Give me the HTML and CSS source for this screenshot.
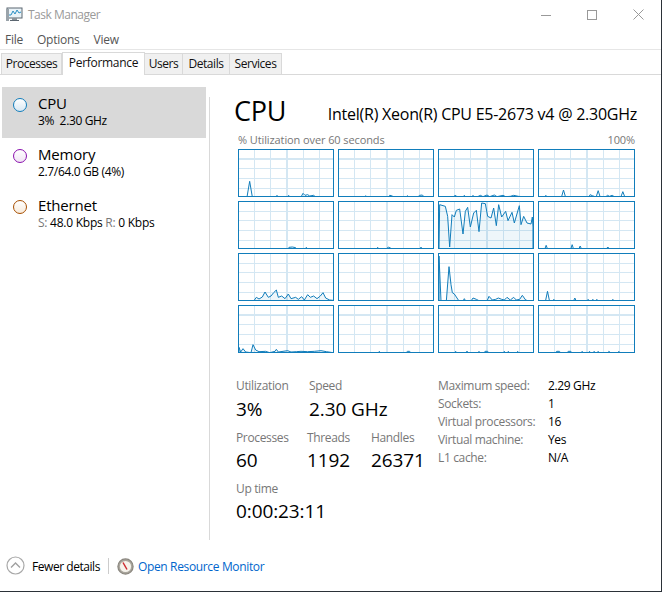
FILE: index.html
```html
<!DOCTYPE html>
<html lang="en">
<head>
<meta charset="utf-8">
<title>Task Manager</title>
<link rel="stylesheet" href="styles.css">
</head>
<body>
<div class="window">
  <header class="titlebar">
    <svg class="appicon" viewBox="0 0 18 16" width="18" height="16">
      <rect x="1" y="1" width="15" height="10" fill="#eaf3f8" stroke="#5b6670"/>
      <polyline points="2,8 5,8 7,4 9,7 11,3 13,6 15,5" fill="none" stroke="#2a8fc4"/>
      <rect x="0" y="2" width="3" height="12" fill="#9aa3aa"/>
      <rect x="6" y="11" width="5" height="2" fill="#8b949b"/>
      <rect x="4" y="13" width="9" height="1" fill="#5b6670"/>
    </svg>
    <span class="apptitle">Task Manager</span>
    <div class="controls">
      <svg width="10" height="10" viewBox="0 0 10 10"><path d="M0 5.5H10" stroke="#999" fill="none"/></svg>
      <svg width="10" height="10" viewBox="0 0 10 10"><rect x=".5" y=".5" width="9" height="9" stroke="#999" fill="none"/></svg>
      <svg width="11" height="11" viewBox="0 0 11 11"><path d="M.5 .5L10.5 10.5M10.5 .5L.5 10.5" stroke="#999" fill="none"/></svg>
    </div>
  </header>
  <nav class="menu"><span>File</span><span>Options</span><span>View</span></nav>
  <div class="tabs">
    <span class="tab t1">Processes</span>
    <span class="tab active t2">Performance</span>
    <span class="tab t3">Users</span>
    <span class="tab t4">Details</span>
    <span class="tab t5">Services</span>
  </div>
  <main class="content">
    <aside class="sidebar">
      <div class="item selected">
        <span class="dot cpu"></span>
        <div><div class="name">CPU</div><div class="sub">3%&nbsp; 2.30 GHz</div></div>
      </div>
      <div class="item">
        <span class="dot mem"></span>
        <div><div class="name">Memory</div><div class="sub">2.7/64.0 GB (4%)</div></div>
      </div>
      <div class="item">
        <span class="dot eth"></span>
        <div><div class="name">Ethernet</div><div class="sub net"><span class="dim">S:</span> 48.0 Kbps <span class="dim">R:</span> 0 Kbps</div></div>
      </div>
    </aside>
    <section class="panel">
      <div class="head"><h1>CPU</h1><div class="model">Intel(R) Xeon(R) CPU E5-2673 v4 @ 2.30GHz</div></div>
      <div class="axis"><span>% Utilization over 60 seconds</span><span>100%</span></div>
      <div class="graphs">
        <div class="graph"><svg viewBox="0 0 282 138"><polyline points="0,141 24,141 32,94 40,141 110,141 114,136 118,141 146,141 149,136 152,141 186,141 192,130 198,136 206,134 212,138 224,136 230,141 282,141"/></svg></div>
        <div class="graph"><svg viewBox="0 0 282 138"><polyline points="0,141 78,141 80,137 82,141 148,141 152,136 158,137 164,141 202,141 205,137 210,141 236,141 242,136 250,135 256,141 282,141"/></svg></div>
        <div class="graph"><svg viewBox="0 0 282 138"><polyline points="0,141 44,141 49,135 54,141 72,141 76,136 80,141 98,141 102,136 106,141 116,140 124,136 132,140 144,135 152,140 166,135 174,140 192,136 200,140 214,139 224,136 238,139 252,140 262,141 282,141"/></svg></div>
        <div class="graph"><svg viewBox="0 0 282 138"><polyline points="0,141 16,141 19,136 22,141 66,141 72,120 78,141 148,141 152,134 158,137 170,141 176,122 182,141 198,141 204,136 210,139 218,136 226,141 244,141 250,125 256,141 282,141"/></svg></div>
        <div class="graph"><svg viewBox="0 0 282 138"><polyline points="0,141 146,141 150,136 160,135 170,137 174,141 198,141 202,136 206,141 282,141"/></svg></div>
        <div class="graph"><svg viewBox="0 0 282 138"><polyline points="0,141 112,141 116,136 120,141 142,141 148,135 154,138 160,141 240,141 246,136 252,141 282,141"/></svg></div>
        <div class="graph"><svg viewBox="0 0 282 138"><polyline class="area" points="0,141 2,8 19,13 26,43 32,135 39,38 46,45 52,25 62,21 72,96 79,28 86,16 94,75 104,33 112,25 120,89 128,3 139,5 146,43 156,48 164,18 172,71 179,8 188,45 200,28 207,56 219,31 226,63 241,11 246,68 254,43 264,63 276,66 280,45 282,75 282,141"/></svg></div>
        <div class="graph"><svg viewBox="0 0 282 138"><polyline points="0,141 16,141 20,130 24,141 94,141 98,128 102,141 118,141 122,132 126,141 200,141 205,135 210,141 282,141"/></svg></div>
        <div class="graph"><svg viewBox="0 0 282 138"><polyline class="area" points="0,141 44,141 52,130 60,135 70,129 78,114 88,130 96,126 104,116 112,108 118,130 128,126 138,134 148,120 156,134 170,130 178,136 188,128 196,138 206,122 214,130 224,126 234,134 244,126 252,116 260,132 272,138 282,139 282,141"/></svg></div>
        <div class="graph"><svg viewBox="0 0 282 138"><polyline points="0,141 282,141"/></svg></div>
        <div class="graph"><svg viewBox="0 0 282 138"><polyline class="area" points="0,141 0,6 6,141 22,141 30,38 36,92 40,116 46,120 60,141 72,141 76,134 80,141 96,141 102,132 112,136 122,141 144,141 150,127 160,138 170,136 178,132 188,136 196,138 204,130 214,138 224,130 232,138 242,136 250,124 260,138 270,141 282,141"/></svg></div>
        <div class="graph"><svg viewBox="0 0 282 138"><polyline points="0,141 18,141 24,112 30,141 40,141 43,136 46,141 102,141 106,132 110,141 142,141 146,136 150,141 156,141 160,136 164,141 168,141 172,136 176,141 216,141 220,136 224,141 282,141"/></svg></div>
        <div class="graph"><svg viewBox="0 0 282 138"><polyline class="area" points="0,141 0,124 5,138 12,128 20,138 36,140 42,116 50,132 60,137 80,136 92,140 108,136 112,130 118,138 146,134 156,138 172,137 186,136 206,137 226,136 246,134 262,137 282,140 282,141"/></svg></div>
        <div class="graph"><svg viewBox="0 0 282 138"><polyline points="0,141 118,141 121,136 124,141 200,141 205,136 212,136 216,141 282,141"/></svg></div>
        <div class="graph"><svg viewBox="0 0 282 138"><polyline points="0,141 46,141 50,136 54,141 78,141 84,136 90,141 116,141 120,136 124,141 134,141 138,136 146,136 150,141 192,141 196,136 200,141 204,141 208,136 212,141 232,141 236,136 240,141 282,141"/></svg></div>
        <div class="graph"><svg viewBox="0 0 282 138"><polyline points="0,141 46,141 52,136 60,136 64,141 82,141 86,136 94,136 98,141 124,141 128,136 132,141 146,141 150,136 154,141 160,141 164,136 168,141 172,141 176,136 180,141 204,141 208,136 214,141 234,141 238,136 242,141 282,141"/></svg></div>
      </div>
      <div class="stats">
        <div class="live">
          <div class="row first">
            <div class="stat w73"><div class="label">Utilization</div><div class="value big">3%</div></div>
            <div class="stat"><div class="label">Speed</div><div class="value big">2.30 GHz</div></div>
          </div>
          <div class="row">
            <div class="stat w71"><div class="label">Processes</div><div class="value">60</div></div>
            <div class="stat w64"><div class="label">Threads</div><div class="value">1192</div></div>
            <div class="stat"><div class="label">Handles</div><div class="value">26371</div></div>
          </div>
          <div class="row">
            <div class="stat"><div class="label">Up time</div><div class="value">0:00:23:11</div></div>
          </div>
        </div>
        <dl class="specs">
          <dt>Maximum speed:</dt><dd>2.29 GHz</dd>
          <dt>Sockets:</dt><dd>1</dd>
          <dt>Virtual processors:</dt><dd>16</dd>
          <dt>Virtual machine:</dt><dd>Yes</dd>
          <dt>L1 cache:</dt><dd>N/A</dd>
        </dl>
      </div>
    </section>
  </main>
  <footer class="footer">
    <svg width="20" height="20" viewBox="0 0 20 20"><circle cx="9.5" cy="9.5" r="8.5" fill="#fff" stroke="#a8a8a8" stroke-width="1.2"/><polyline points="5,11.5 9.5,7 14,11.5" fill="none" stroke="#a0a0a0" stroke-width="1.4"/></svg>
    <span class="fewer">Fewer details</span>
    <span class="sep"></span>
    <svg width="17" height="17" viewBox="0 0 17 17"><circle cx="8.5" cy="8.5" r="7.6" fill="#a9a59c" stroke="#8a867e" stroke-width="1.2"/><circle cx="8.5" cy="8.5" r="5.6" fill="#f6f3ec"/><path d="M6 4.5L10 11.5" stroke="#cc2a2f" stroke-width="1.5"/></svg>
    <a class="link">Open Resource Monitor</a>
  </footer>
</div>
</body>
</html>
```
FILE: styles.css
```css
* { box-sizing: border-box; }
html, body { margin: 0; padding: 0; background: #fff; }
body { font-family: "Open Sans", "Noto Sans", "Liberation Sans", sans-serif; font-size: 12px; color: #000; }
.window { width: 662px; height: 592px; display: flex; flex-direction: column; border-right: 1px solid #2b3138; border-bottom: 1px solid #2b3138; overflow: hidden; }

.titlebar { height: 29px; display: flex; align-items: center; padding-left: 6px; flex: none; }
.appicon { flex: none; }
.apptitle { margin-left: 4px; color: #9a9a9a; font-size: 12px; letter-spacing: -.5px; }
.controls { margin-left: auto; display: flex; align-items: center; gap: 36px; padding-right: 17px; }

.menu { height: 21px; display: flex; gap: 14px; padding-left: 5px; align-items: center; color: #555; font-size: 12px; letter-spacing: -.25px; border-bottom: 1px solid #e6e6e6; flex: none; }

.tabs { height: 25px; display: flex; align-items: flex-end; border-bottom: 1px solid #d9d9d9; flex: none; padding-left: 1px; }
.tab { height: 21px; line-height: 20px; background: #f0f0f0; border: 1px solid #d9d9d9; border-bottom: 0; border-left: 0; text-align: center; font-size: 12px; letter-spacing: -.45px; color: #111; }
.tab.active { height: 23px; margin-bottom: -1px; line-height: 20px; background: #fff; border-left: 1px solid #d9d9d9; position: relative; }
.t1 { width: 61px; border-left: 1px solid #d9d9d9; }
.t2 { width: 83px; letter-spacing: -.3px; }
.t3 { width: 38px; }
.t4 { width: 47px; }
.t5 { width: 52px; }

.content { flex: 1; display: flex; min-height: 0; padding-top: 12px; }
.sidebar { width: 209px; flex: none; padding-left: 2px; padding-right: 3px; }
.item { height: 51px; display: flex; align-items: flex-start; gap: 11px; padding: 8px 0 0 11px; }
.item.selected { background: #d9d9d9; }
.dot { width: 14px; height: 14px; border-radius: 50%; margin-top: 3px; flex: none; border: 1.5px solid; }
.cpu { border-color: #117dbb; background: linear-gradient(#fff, #d9e8f3); }
.mem { border-color: #8b12ae; background: linear-gradient(#fff, #f0e4f4); }
.eth { border-color: #a74f01; background: linear-gradient(#fff, #f8ebdc); }
.name { font-size: 15px; line-height: 17px; letter-spacing: -.2px; }
.sub { font-size: 12px; line-height: 16px; letter-spacing: -.35px; margin-top: 1px; }
.sub.net { letter-spacing: -.25px; }
.dim { color: #777; }

.panel { flex: 1; margin-top: 10px; border-left: 1px solid #d9d9d9; padding: 0 24px 0 26px; height: 443px; min-width: 0; }
.head { display: flex; align-items: flex-end; justify-content: space-between; height: 30px; }
h1 { margin: 0 0 0 -2px; font-size: 27px; font-weight: 400; line-height: 32px; letter-spacing: -.3px; }
.model { font-size: 16px; line-height: 20px; letter-spacing: -.25px; white-space: nowrap; margin-bottom: 3px; margin-left: -9px; }
.axis { display: flex; justify-content: space-between; margin: 6px 2px 0 2px; height: 14px; line-height: 14px; color: #777; font-size: 11px; letter-spacing: -.1px; }
.graphs { display: grid; grid-template-columns: repeat(3, 96px) 97px; grid-template-rows: repeat(4, 48px); gap: 4px; margin: 2px 0 0 2px; width: 397px; }
.graph { border: 1px solid #117dbb; background-color: #fff;
  background-image:
    repeating-linear-gradient(to right, transparent 0 15px, #d4e7f3 15px 16.2px),
    repeating-linear-gradient(to bottom, transparent 0 8.5px, #d4e7f3 8.5px 9.7px); }
.graph svg { display: block; width: 100%; height: 46px; overflow: hidden; }
.graph polyline { fill: none; stroke: #117dbb; stroke-width: 3; stroke-linejoin: round; }
.graph polyline.area { fill: rgba(17,125,187,.07); }

.stats { display: flex; margin-top: 24px; }
.live { width: 202px; flex: none; margin-top: -1px; }
.row { display: flex; height: 51px; }
.row.first { height: 52px; }
.row.first .value { margin-top: 1px; }
.stat { flex: none; }
.w73 { width: 73px; }
.w71 { width: 71px; }
.w64 { width: 64px; }
.label { color: #777; font-size: 12px; line-height: 19px; letter-spacing: -.35px; }
.value { font-size: 19px; line-height: 26px; letter-spacing: -.1px; white-space: nowrap; }
.specs { margin: 0; display: grid; grid-template-columns: 110px auto; grid-auto-rows: 18px; line-height: 18px; font-size: 12px; letter-spacing: -.35px; }
.specs dt { color: #777; }
.specs dd { margin: 0; }

.footer { height: 50px; display: flex; align-items: center; padding-left: 6px; flex: none; font-size: 12px; letter-spacing: -.45px; margin-top: auto; }
.fewer { margin-left: 6px; }
.sep { width: 1px; height: 16px; background: #ccc; margin: 0 8px; }
.link { color: #0066cc; margin-left: 4px; letter-spacing: -.35px; }
```
